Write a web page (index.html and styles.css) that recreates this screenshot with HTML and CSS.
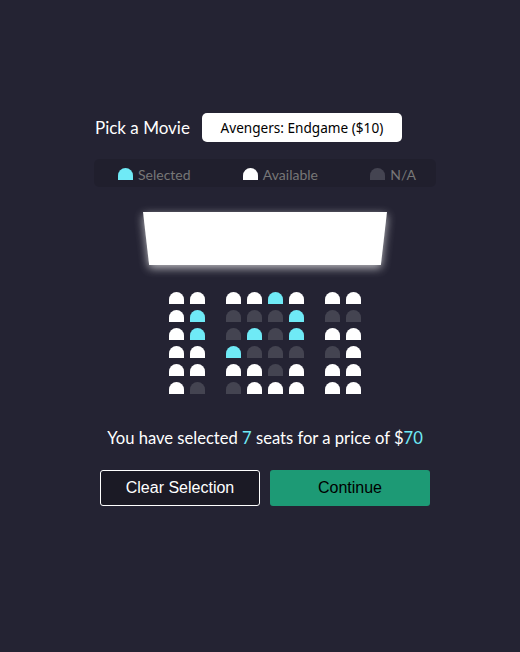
FILE: index.html
```html
<!DOCTYPE html>
<html lang="en">
<head>
<meta charset="utf-8">
<title>Movie Seat Booking</title>
<link rel="stylesheet" href="styles.css">
</head>
<body>
<main class="page">
  <div class="movie-row">
    <label class="movie-label">Pick a Movie</label>
    <div class="movie-select">Avengers: Endgame ($10)</div>
  </div>

  <ul class="legend">
    <li><span class="seat seat--selected"></span><small>Selected</small></li>
    <li><span class="seat seat--available"></span><small>Available</small></li>
    <li><span class="seat seat--na"></span><small>N/A</small></li>
  </ul>

  <div class="screen-wrap"><div class="screen"></div></div>

  <div class="seats">
    <div class="row"><span class="seat a"></span><span class="seat a"></span><span class="seat a"></span><span class="seat a"></span><span class="seat s"></span><span class="seat a"></span><span class="seat a"></span><span class="seat a"></span></div>
    <div class="row"><span class="seat a"></span><span class="seat s"></span><span class="seat n"></span><span class="seat n"></span><span class="seat n"></span><span class="seat s"></span><span class="seat n"></span><span class="seat n"></span></div>
    <div class="row"><span class="seat a"></span><span class="seat s"></span><span class="seat n"></span><span class="seat s"></span><span class="seat n"></span><span class="seat s"></span><span class="seat a"></span><span class="seat a"></span></div>
    <div class="row"><span class="seat a"></span><span class="seat a"></span><span class="seat s"></span><span class="seat n"></span><span class="seat n"></span><span class="seat n"></span><span class="seat n"></span><span class="seat a"></span></div>
    <div class="row"><span class="seat a"></span><span class="seat a"></span><span class="seat a"></span><span class="seat a"></span><span class="seat n"></span><span class="seat a"></span><span class="seat a"></span><span class="seat a"></span></div>
    <div class="row"><span class="seat a"></span><span class="seat n"></span><span class="seat n"></span><span class="seat a"></span><span class="seat a"></span><span class="seat a"></span><span class="seat a"></span><span class="seat a"></span></div>
  </div>

  <p class="summary">You have selected <span class="hl">7</span> seats for a price of $<span class="hl">70</span></p>

  <div class="actions">
    <button class="btn btn--clear">Clear Selection</button>
    <button class="btn btn--continue">Continue</button>
  </div>
</main>
</body>
</html>
```

FILE: styles.css
```css
html, body {
  margin: 0;
  padding: 0;
}

body {
  background-color: #242333;
  color: #fff;
  font-family: Lato, "Noto Sans", sans-serif;
  height: 652px;
}

.page {
  width: 342px;
  margin-left: 94px;
  padding-top: 113px;
  display: flex;
  flex-direction: column;
  align-items: center;
}

.movie-row {
  align-self: flex-start;
  margin-left: 1px;
  display: flex;
  align-items: center;
  height: 29px;
}

.movie-label {
  font-size: 17px;
}

.movie-select {
  margin-left: 12px;
  width: 200px;
  height: 29px;
  box-sizing: border-box;
  background: #fff;
  color: #000;
  border-radius: 5px;
  font-family: "Noto Sans", sans-serif;
  font-size: 13.6px;
  display: flex;
  align-items: center;
  justify-content: center;
}

.legend {
  list-style: none;
  margin: 17px 0 0 0;
  padding: 0 20px 0 24px;
  align-self: stretch;
  height: 28px;
  box-sizing: border-box;
  background: rgba(0, 0, 0, 0.1);
  border-radius: 5px;
  display: flex;
  justify-content: space-between;
  align-items: center;
  color: #777;
}

.legend li {
  display: flex;
  align-items: center;
  padding-top: 2px;
}

.legend small {
  font-size: 14px;
  margin-left: 5px;
}

.seat {
  display: block;
  width: 15px;
  height: 12px;
  border-top-left-radius: 10px;
  border-top-right-radius: 10px;
  background: #444451;
}

.seat--selected, .seat.s { background: #6feaf6; }
.seat--available, .seat.a { background: #fff; }
.seat--na, .seat.n { background: #444451; }

.screen-wrap {
  margin-top: 25px;
  filter: drop-shadow(0 3px 5px rgba(255, 255, 255, 0.7));
}

.screen {
  width: 244px;
  height: 53px;
  background: #fff;
  clip-path: polygon(0 0, 100% 0, 97.5% 100%, 2.5% 100%);
}

.seats {
  margin-top: 24px;
  display: flex;
  flex-direction: column;
}

.row {
  display: flex;
}

.row .seat {
  margin: 3px;
}

.row .seat:nth-child(2) { margin-right: 18px; }
.row .seat:nth-child(7) { margin-left: 18px; }

.summary {
  margin: 30px 0 0 0;
  font-size: 16.6px;
  line-height: 22px;
}

.hl {
  color: #6feaf6;
}

.actions {
  margin-top: 21px;
  display: flex;
  gap: 10px;
}

.btn {
  width: 160px;
  height: 36px;
  font-family: "Liberation Sans", Arial, sans-serif;
  font-size: 16px;
  border-radius: 3px;
  cursor: pointer;
}

.btn--clear {
  background: #1b1a25;
  color: #fff;
  border: 1px solid #fff;
}

.btn--continue {
  background: #1d9a75;
  color: #000;
  border: 0;
}
```
